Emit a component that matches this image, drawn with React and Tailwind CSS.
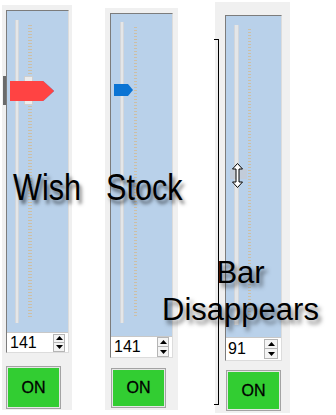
import React from 'react';

const Spinner = ({ w, h }) => (
  <div className="flex flex-col mr-[3px]" style={{ width: w }}>
    <div className="flex items-center justify-center border border-[#b5b5b5] bg-[#f4f4f4]" style={{ height: h }}>
      <svg width="7" height="4" viewBox="0 0 7 4"><path d="M3.5 0 L7 4 L0 4 Z" fill="#000" /></svg>
    </div>
    <div className="flex items-center justify-center border border-t-0 border-[#b5b5b5] bg-[#f4f4f4]" style={{ height: h }}>
      <svg width="7" height="4" viewBox="0 0 7 4"><path d="M0 0 L7 0 L3.5 4 Z" fill="#000" /></svg>
    </div>
  </div>
);

const Ticks = ({ className }) => (
  <div
    className={`bg-[repeating-linear-gradient(to_bottom,#cdbfa6_0px,#cdbfa6_1px,transparent_1px,transparent_3px)] ${className}`}
  />
);

const OnButton = ({ className }) => (
  <div className={`border border-[#a3a3a3] bg-[#e6e6e6] p-[1px] ${className}`}>
    <div className="w-full h-full bg-[#32cd32] flex items-center justify-center text-[16px] text-black [-webkit-text-stroke:0.3px_#000]">
      ON
    </div>
  </div>
);

export default function App() {
  return (
    <div className="relative w-[336px] h-[415px] bg-white overflow-hidden font-['Liberation_Sans',Arial,sans-serif]">
      <div className="flex items-start">
        {/* Wish */}
        <div className="ml-[2px] mt-[5px] w-[70px] h-[405px] bg-[#f0f0f0] pl-[4px] pt-[5px]">
          <div className="w-[63px] border border-t-[#7c7c7c] border-l-[#7c7c7c] border-r-[#dcdcdc] border-b-[#dcdcdc]">
            <div className="relative flex items-start h-[321px] bg-[#b9d1ea]">
              <div className="ml-[8px] mt-[9px] w-[4px] h-[303px] bg-[#e4e6e8] border-x border-[#d3d6da]" />
              <Ticks className="ml-[9px] mt-[14px] w-[4px] h-[293px]" />
              <div className="absolute left-[17px] top-[65px] w-[9px] h-[29px] bg-[#ececec] border border-[#cfcfcf]" />
            </div>
            <div className="flex items-center justify-between h-[20px] bg-white border-t border-[#c8c8c8]">
              <span className="pl-[3px] text-[16px] leading-none text-black">141</span>
              <Spinner w={12} h={9} />
            </div>
          </div>
          <OnButton className="mt-[13px] w-[55px] h-[43px]" />
        </div>

        {/* Stock */}
        <div className="ml-[33px] mt-[8px] w-[73px] h-[402px] bg-[#f0f0f0] pl-[5px] pt-[5px]">
          <div className="w-[63px] border border-t-[#7c7c7c] border-l-[#7c7c7c] border-r-[#dcdcdc] border-b-[#dcdcdc]">
            <div className="relative flex items-start h-[322px] bg-[#b9d1ea]">
              <div className="ml-[9px] mt-[8px] w-[4px] h-[301px] bg-[#e4e6e8] border-x border-[#d3d6da]" />
              <Ticks className="ml-[10px] mt-[13px] w-[3px] h-[290px]" />
            </div>
            <div className="flex items-center justify-between h-[21px] bg-white border-t border-[#c8c8c8]">
              <span className="pl-[3px] text-[16px] leading-none text-black">141</span>
              <Spinner w={12} h={10} />
            </div>
          </div>
          <OnButton className="mt-[10px] ml-[1px] w-[55px] h-[40px]" />
        </div>

        {/* Bar disappears */}
        <div className="ml-[37px] mt-[2px] w-[75px] h-[411px] bg-[#f0f0f0] pl-[10px] pt-[13px]">
          <div className="w-[57px] border border-t-[#7c7c7c] border-l-[#7c7c7c] border-r-[#dcdcdc] border-b-[#dcdcdc]">
            <div className="relative flex items-start h-[321px] bg-[#b9d1ea]">
              <div className="ml-[8px] mt-[9px] w-[5px] h-[300px] bg-[#e4e6e8] border-x border-[#d3d6da]" />
              <Ticks className="ml-[9px] mt-[13px] w-[3px] h-[290px]" />
            </div>
            <div className="flex items-center justify-between h-[23px] bg-white border-t border-[#c8c8c8]">
              <span className="pl-[2px] text-[16px] leading-none text-black">91</span>
              <Spinner w={14} h={10} />
            </div>
          </div>
          <OnButton className="mt-[9px] ml-[1px] w-[55px] h-[41px]" />
        </div>
      </div>

      {/* markers */}
      <div className="absolute left-[3px] top-[76px] w-[3px] h-[29px] bg-[#6b6b6b]" />
      <svg className="absolute left-[10px] top-[81px]" width="45" height="20" viewBox="0 0 45 20">
        <path d="M0 0 H33 L44 10 L33 20 H0 Z" fill="#ff4343" stroke="#5a9be0" strokeWidth="0.6" />
        <path d="M0 0 H33 L44 10 L33 20 H0 Z" fill="#ff4343" />
      </svg>
      <svg className="absolute left-[114px] top-[84px]" width="20" height="12" viewBox="0 0 20 12">
        <path d="M0 0 H14 L19 6 L14 12 H0 Z" fill="#0a74d4" />
      </svg>

      {/* ghost thumb + resize cursor */}
      <div className="absolute left-[230px] top-[169px] w-[17px] h-[10px] bg-[#c6cbd1] opacity-70" />
      <svg className="absolute left-[232px] top-[163px]" width="11" height="25" viewBox="0 0 11 25">
        <path
          d="M5.5 0.5 L10.5 6 L7 6 L7 19 L10.5 19 L5.5 24.5 L0.5 19 L4 19 L4 6 L0.5 6 Z"
          fill="#fff"
          stroke="#000"
          strokeWidth="1"
          strokeLinejoin="miter"
        />
      </svg>

      {/* bracket */}
      <div className="absolute left-[214px] top-[39px] w-[5px] h-[366px] border-r border-y border-black" />

      {/* labels */}
      <div className="absolute left-[13px] top-[170px] text-[36px] leading-none text-black origin-left scale-x-[0.85] [text-shadow:3px_4px_4px_rgba(0,0,0,0.5)]">
        Wish
      </div>
      <div className="absolute left-[106px] top-[170px] text-[36px] leading-none text-black origin-left scale-x-[0.85] [text-shadow:3px_4px_4px_rgba(0,0,0,0.5)]">
        Stock
      </div>
      <div className="absolute left-[162px] top-[254px] w-[157px] text-center text-[31px] leading-[37px] text-black [text-shadow:3px_4px_4px_rgba(0,0,0,0.5)]">
        Bar
        <br />
        Disappears
      </div>
    </div>
  );
}
